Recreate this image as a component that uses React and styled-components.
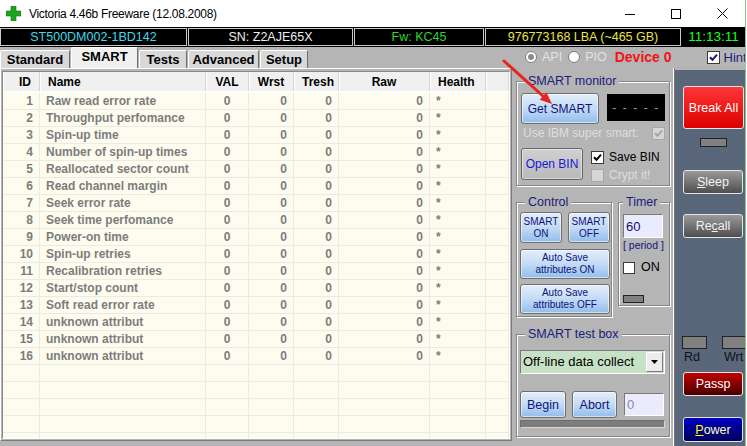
import React from 'react'
import styled, { createGlobalStyle } from 'styled-components'

const GlobalStyle = createGlobalStyle`
  html, body {
    margin: 0;
    padding: 0;
    background: #fff;
  }
  body {
    font-family: 'Liberation Sans', Arial, sans-serif;
    overflow: hidden;
  }
`

const attributes = [
  'Raw read error rate',
  'Throughput perfomance',
  'Spin-up time',
  'Number of spin-up times',
  'Reallocated sector count',
  'Read channel margin',
  'Seek error rate',
  'Seek time perfomance',
  'Power-on time',
  'Spin-up retries',
  'Recalibration retries',
  'Start/stop count',
  'Soft read error rate',
  'unknown attribut',
  'unknown attribut',
  'unknown attribut',
]

const columns = [
  { title: 'ID', width: '37px', align: 'right', head: 'right' },
  { title: 'Name', width: '166px', align: 'left', head: 'left' },
  { title: 'VAL', width: '43px', align: 'center', head: 'center' },
  { title: 'Wrst', width: '45px', align: 'right', head: 'center' },
  { title: 'Tresh', width: '45px', align: 'right', head: 'center' },
  { title: 'Raw', width: '91px', align: 'right', head: 'center' },
  { title: 'Health', width: '56px', align: 'left', head: 'left' },
  { title: '', width: '1fr', align: 'left', head: 'left' },
]

const template = columns.map((c) => c.width).join(' ')

const tabs = [
  { label: 'Standard', w: 70 },
  { label: 'SMART', w: 67, active: true },
  { label: 'Tests', w: 48 },
  { label: 'Advanced', w: 71 },
  { label: 'Setup', w: 48 },
]

const GRAY = '#b5b5b5'

const Window = styled.div`
  position: relative;
  width: 745px;
  height: 446px;
  border-right: 1px solid #86c986;
  background: ${GRAY};
  overflow: hidden;
`

const TitleBar = styled.div`
  display: flex;
  align-items: center;
  height: 27px;
  background: #fff;
`

const AppIcon = styled.svg`
  flex: none;
  margin: 0 8px 0 6px;
`

const Caption = styled.span`
  flex: 1;
  font-size: 12px;
  letter-spacing: -0.3px;
  color: #000;
`

const CaptionButton = styled.div`
  flex: none;
  width: 46px;
  height: 27px;
  display: flex;
  align-items: center;
  justify-content: center;
`

const InfoBar = styled.div`
  display: flex;
  gap: 1px;
  height: 20px;
  padding: 1px 0;
  box-sizing: border-box;
  background: #000;
`

const InfoCell = styled.div`
  flex: ${(p) => (p.$w ? `0 0 ${p.$w}px` : '1')};
  box-sizing: border-box;
  border: 1px solid ${(p) => (p.$bare ? 'transparent' : '#c9c9c9')};
  color: ${(p) => p.$color};
  font-size: ${(p) => (p.$big ? 13.5 : 12.5)}px;
  line-height: 16px;
  text-align: center;
  white-space: nowrap;
`

const Toolbar = styled.div`
  display: flex;
  align-items: flex-end;
  height: 21px;
`

const Tab = styled.div`
  flex: none;
  width: ${(p) => p.$w}px;
  height: ${(p) => (p.$active ? 21 : 18)}px;
  margin-right: 1px;
  box-sizing: border-box;
  border: 1px solid;
  border-color: #fff #6e6e6e transparent #fff;
  border-bottom: none;
  border-radius: 2px 2px 0 0;
  background: ${(p) => (p.$active ? '#f0f0f0' : '#d8d8d8')};
  font-size: 13px;
  font-weight: bold;
  color: #000;
  display: flex;
  align-items: center;
  justify-content: center;
  padding-bottom: ${(p) => (p.$active ? 3 : 0)}px;
`

const Options = styled.div`
  display: flex;
  align-items: center;
  align-self: stretch;
  margin-left: 216px;
  padding-bottom: 1px;
  white-space: nowrap;
`

const Radio = styled.span`
  flex: none;
  width: 12px;
  height: 12px;
  box-sizing: border-box;
  border-radius: 50%;
  border: 1px solid #7c7c7c;
  background: #fff;
  display: flex;
  align-items: center;
  justify-content: center;
  margin-left: ${(p) => p.$gap || 0}px;
  &::after {
    content: '';
    width: 6px;
    height: 6px;
    border-radius: 50%;
    background: ${(p) => (p.$on ? '#8a8a8a' : 'transparent')};
  }
`

const DimLabel = styled.span`
  margin-left: 5px;
  font-size: 12.5px;
  color: #e2e2e2;
`

const DeviceLabel = styled.span`
  margin-left: 8px;
  font-size: 14px;
  font-weight: bold;
  color: #f01414;
`

const HintsLabel = styled.span`
  margin-left: 4px;
  font-size: 13px;
  color: #1b1b7c;
`

const CheckBox = styled.span`
  flex: none;
  width: ${(p) => p.$size || 13}px;
  height: ${(p) => p.$size || 13}px;
  box-sizing: border-box;
  margin-left: ${(p) => p.$gap || 0}px;
  border: 1px solid ${(p) => (p.$disabled ? '#a8a8a8' : '#3a3a3a')};
  background: ${(p) => (p.$disabled ? '#d6d6d6' : '#fff')};
  display: inline-flex;
  align-items: center;
  justify-content: center;
`

const Tick = ({ color }) => (
  <svg width="9" height="9" viewBox="0 0 9 9">
    <path d="M1 4.2 L3.5 6.8 L8 1.6" fill="none" stroke={color} strokeWidth="2" />
  </svg>
)

const Workspace = styled.div`
  display: flex;
  height: 378px;
`

const TabPage = styled.div`
  flex: none;
  width: 512px;
  height: 373px;
  box-sizing: border-box;
  padding: 2px 1px 1px;
  border: 1px solid;
  border-color: #fff #7a7a7a #7a7a7a #fff;
`

const Sheet = styled.div`
  height: 100%;
  box-sizing: border-box;
  border: 1px solid;
  border-color: #8a8a8a #fff #fff #8a8a8a;
  background: #fefcef;
  overflow: hidden;
`

const HeadRow = styled.div`
  display: grid;
  grid-template-columns: ${template};
  height: 21px;
  box-sizing: border-box;
  background: #f0f0f0;
  border-bottom: 2px solid #fff;
`

const HeadCell = styled.div`
  padding: 2px 8px 0;
  text-align: ${(p) => p.$align};
  font-size: 12px;
  font-weight: bold;
  line-height: 16px;
  color: #000;
  border-right: 1px solid #d4d4d4;
  box-shadow: inset 1px 0 0 #fff;
  white-space: nowrap;
  overflow: hidden;
`

const Row = styled.div`
  display: grid;
  grid-template-columns: ${template};
  height: 17px;
  box-sizing: border-box;
  border-bottom: 1px solid #ebebe3;
`

const Cell = styled.div`
  padding: 0 6px;
  text-align: ${(p) => p.$align};
  font-size: 12px;
  font-weight: bold;
  line-height: 17px;
  color: #7c7c7c;
  border-right: 1px solid #ebebe3;
  white-space: nowrap;
  overflow: hidden;
`

const SidePanel = styled.div`
  flex: none;
  width: 163px;
  box-sizing: border-box;
  padding: 6px 0 0 4px;
  display: flex;
  flex-direction: column;
  box-shadow: inset -1px 0 0 #7a7a7a, inset -2px 0 0 #fff;
`

const GroupBox = styled.fieldset`
  margin: 0;
  min-width: 0;
  width: ${(p) => p.$w}px;
  box-sizing: border-box;
  padding: ${(p) => p.$pad};
  border: 1px solid #858585;
  box-shadow: inset 1px 1px 0 #fff, 1px 1px 0 #fff;
`

const Legend = styled.legend`
  padding: 0 3px;
  margin-left: ${(p) => p.$indent ?? 4}px;
  font-size: 12.5px;
  line-height: 14px;
  color: #1b1b7c;
  background: ${GRAY};
`

const BoxRow = styled.div`
  display: flex;
  align-items: ${(p) => p.$align || 'flex-start'};
  justify-content: ${(p) => p.$justify || 'flex-start'};
  gap: ${(p) => p.$gap || 0}px;
  margin-top: ${(p) => p.$top || 0}px;
`

const AquaButton = styled.button`
  flex: none;
  width: ${(p) => p.$w}px;
  height: ${(p) => p.$h}px;
  margin: 0 0 0 ${(p) => p.$left || 0}px;
  padding: 0;
  box-sizing: border-box;
  border: 1px solid #6f6f6f;
  border-radius: 3px;
  background: linear-gradient(#e3eefb, #c3dbf6 50%, #93bdeb);
  box-shadow: inset 0 0 0 1px rgba(255, 255, 255, 0.55);
  font-family: inherit;
  font-size: ${(p) => p.$size || 12}px;
  line-height: ${(p) => p.$lh || 'normal'};
  color: #10127a;
`

const PlainButton = styled.button`
  flex: none;
  width: 62px;
  height: 32px;
  margin: 0;
  padding: 0;
  box-sizing: border-box;
  border: 1px solid #666;
  border-radius: 3px;
  background: linear-gradient(#d0d0d0, #b9b9b9);
  box-shadow: inset 0 0 0 1px rgba(255, 255, 255, 0.45);
  font-family: inherit;
  font-size: 12px;
  color: #1717dc;
`

const Readout = styled.div`
  flex: none;
  width: 58px;
  height: 27px;
  margin: 1px 0 0 8px;
  background: #000;
  color: #9c9c9c;
  font-size: 12px;
  letter-spacing: 1.6px;
  display: flex;
  align-items: center;
  justify-content: center;
`

const DisabledText = styled.span`
  font-size: 12px;
  color: #dedede;
  padding-left: 2px;
`

const CheckColumn = styled.div`
  display: flex;
  flex-direction: column;
  gap: 5px;
  margin-left: 8px;
  padding-top: 3px;
`

const CheckLine = styled.label`
  display: flex;
  align-items: center;
  gap: ${(p) => p.$gap || 5}px;
  font-size: ${(p) => p.$size || 12}px;
  line-height: 13px;
  color: ${(p) => (p.$disabled ? '#dedede' : '#000')};
`

const Field = styled.div`
  flex: none;
  width: 40px;
  height: ${(p) => p.$h || 24}px;
  box-sizing: border-box;
  margin: ${(p) => p.$top || 0}px 0 0 ${(p) => p.$left || 0}px;
  border: 1px solid;
  border-color: #7a7a7a #fff #fff #7a7a7a;
  background: #ebebff;
  padding-left: 2px;
  font-size: 13px;
  color: ${(p) => p.$color || '#0e0e6e'};
  display: flex;
  align-items: center;
`

const Caption2 = styled.div`
  margin-top: 1px;
  font-size: 10.5px;
  line-height: 12px;
  color: #14147a;
`

const Lamp = styled.div`
  width: ${(p) => p.$w}px;
  height: ${(p) => p.$h}px;
  box-sizing: border-box;
  margin: ${(p) => p.$m || 0};
  background: #808080;
  border: 1px solid #222;
`

const Combo = styled.div`
  display: flex;
  width: 145px;
  height: 24px;
  box-sizing: border-box;
  border: 1px solid;
  border-color: #7a7a7a #fff #fff #7a7a7a;
  background: #c6e1c6;
`

const ComboText = styled.span`
  flex: 1;
  padding-left: 2px;
  font-size: 13px;
  line-height: 22px;
  color: #000;
`

const ComboButton = styled.span`
  flex: none;
  width: 17px;
  margin: 1px;
  box-sizing: border-box;
  border: 1px solid;
  border-color: #fff #7a7a7a #7a7a7a #fff;
  background: #ececec;
  display: flex;
  align-items: center;
  justify-content: center;
`

const Progress = styled.div`
  width: 145px;
  height: 8px;
  margin-top: 2px;
  box-sizing: border-box;
  border: 1px solid;
  border-color: #6e6e6e #d8d8d8 #d8d8d8 #6e6e6e;
  background: #7d7d7d;
`

const CommandStrip = styled.div`
  flex: 1;
  margin-top: 2px;
  padding: 16px 0 0 8px;
  background: #5a677a;
  display: flex;
  flex-direction: column;
  align-items: flex-start;
  overflow: hidden;
`

const tones = {
  alarm: ['#ff3636', '#dc0000', '#fff'],
  slate: ['#9a9a9a', '#4e4e4e', '#f2f2f2'],
  maroon: ['#c20000', '#480000', '#fff'],
  navy: ['#0000c4', '#00005c', '#ffffb0'],
}

const StripButton = styled.button`
  flex: none;
  width: ${(p) => p.$w || 60}px;
  height: ${(p) => p.$h}px;
  margin: ${(p) => p.$top || 0}px 0 0;
  padding: 0;
  box-sizing: border-box;
  border: 1px solid #e4e4e4;
  border-radius: 3px;
  background: linear-gradient(${(p) => tones[p.$tone][0]}, ${(p) => tones[p.$tone][1]});
  font-family: inherit;
  font-size: 12.5px;
  color: ${(p) => tones[p.$tone][2]};
`

const HotKey = styled.u`
  color: ${(p) => p.$color || 'inherit'};
  text-decoration-thickness: 1px;
`

const LedPair = styled.div`
  display: flex;
  gap: 15px;
  margin: 98px 0 0 -1px;
`

const Led = styled.div`
  display: flex;
  flex-direction: column;
  align-items: flex-start;
`

const LedLabel = styled.span`
  margin: 1px 0 0 2px;
  font-size: 12.5px;
  line-height: 14px;
  color: #101018;
`

const Annotation = styled.svg`
  position: absolute;
  left: 500px;
  top: 58px;
  pointer-events: none;
`

const blankRows = 6

export default function App() {
  return (
    <>
      <GlobalStyle />
      <Window>
        <TitleBar>
          <AppIcon width="15" height="15" viewBox="0 0 15 15">
            <path d="M5 0h5v5h5v5h-5v5H5v-5H0V5h5z" fill="#1ea31e" stroke="#137a13" strokeWidth="0.6" />
          </AppIcon>
          <Caption>Victoria 4.46b Freeware (12.08.2008)</Caption>
          <CaptionButton>
            <svg width="10" height="10" viewBox="0 0 10 10">
              <path d="M0 5.5h10" stroke="#000" strokeWidth="1" />
            </svg>
          </CaptionButton>
          <CaptionButton>
            <svg width="10" height="10" viewBox="0 0 10 10">
              <rect x="0.5" y="0.5" width="9" height="9" fill="none" stroke="#000" strokeWidth="1" />
            </svg>
          </CaptionButton>
          <CaptionButton>
            <svg width="11" height="11" viewBox="0 0 11 11">
              <path d="M0.5 0.5l10 10M10.5 0.5l-10 10" stroke="#000" strokeWidth="1" />
            </svg>
          </CaptionButton>
        </TitleBar>

        <InfoBar>
          <InfoCell $w={187} $color="#3fd9ec">ST500DM002-1BD142</InfoCell>
          <InfoCell $w={165} $color="#ececec">SN: Z2AJE65X</InfoCell>
          <InfoCell $w={130} $color="#2fd42f">Fw: KC45</InfoCell>
          <InfoCell $w={196} $color="#ebe444">976773168 LBA (~465 GB)</InfoCell>
          <InfoCell $bare $big $color="#1cff1c">11:13:11</InfoCell>
        </InfoBar>

        <Toolbar>
          {tabs.map((t) => (
            <Tab key={t.label} $w={t.w} $active={t.active}>
              {t.label}
            </Tab>
          ))}
          <Options>
            <Radio $on />
            <DimLabel>API</DimLabel>
            <Radio $gap={6} />
            <DimLabel>PIO</DimLabel>
            <DeviceLabel>Device 0</DeviceLabel>
            <CheckBox $gap={35}>
              <Tick color="#14147a" />
            </CheckBox>
            <HintsLabel>Hints</HintsLabel>
          </Options>
        </Toolbar>

        <Workspace>
          <TabPage>
            <Sheet>
              <HeadRow>
                {columns.map((c, i) => (
                  <HeadCell key={i} $align={c.head}>
                    {c.title}
                  </HeadCell>
                ))}
              </HeadRow>
              {attributes.map((name, i) => (
                <Row key={i}>
                  <Cell $align="right">{i + 1}</Cell>
                  <Cell $align="left">{name}</Cell>
                  <Cell $align="center">0</Cell>
                  <Cell $align="right">0</Cell>
                  <Cell $align="right">0</Cell>
                  <Cell $align="right">0</Cell>
                  <Cell $align="left">*</Cell>
                  <Cell $align="left" />
                </Row>
              ))}
              {Array.from({ length: blankRows }).map((_, i) => (
                <Row key={`blank-${i}`}>
                  {columns.map((c, j) => (
                    <Cell key={j} $align={c.align} />
                  ))}
                </Row>
              ))}
            </Sheet>
          </TabPage>

          <SidePanel>
            <GroupBox $w={154} $pad="5px 4px 3px">
              <Legend>SMART monitor</Legend>
              <BoxRow>
                <AquaButton $w={78} $h={31}>Get SMART</AquaButton>
                <Readout>- - - - -</Readout>
              </BoxRow>
              <BoxRow $top={2} $align="center" $justify="space-between">
                <DisabledText>Use IBM super smart:</DisabledText>
                <CheckBox $disabled $size={13}>
                  <Tick color="#a4a4a4" />
                </CheckBox>
              </BoxRow>
              <BoxRow $top={8}>
                <PlainButton>Open BIN</PlainButton>
                <CheckColumn>
                  <CheckLine>
                    <CheckBox>
                      <Tick color="#000" />
                    </CheckBox>
                    Save BIN
                  </CheckLine>
                  <CheckLine $disabled>
                    <CheckBox $disabled />
                    Crypt it!
                  </CheckLine>
                </CheckColumn>
              </BoxRow>
            </GroupBox>

            <BoxRow $top={9} $gap={6}>
              <GroupBox $w={96} $pad="3px 2px 2px 3px">
                <Legend $indent={5}>Control</Legend>
                <BoxRow $gap={6}>
                  <AquaButton $w={42} $h={31} $size={10} $lh="12px">
                    SMART
                    <br />
                    ON
                  </AquaButton>
                  <AquaButton $w={42} $h={31} $size={10} $lh="12px">
                    SMART
                    <br />
                    OFF
                  </AquaButton>
                </BoxRow>
                <BoxRow $top={6}>
                  <AquaButton $w={90} $h={30} $size={10} $lh="12px">
                    Auto Save
                    <br />
                    attributes ON
                  </AquaButton>
                </BoxRow>
                <BoxRow $top={5}>
                  <AquaButton $w={90} $h={30} $size={10} $lh="12px">
                    Auto Save
                    <br />
                    attributes OFF
                  </AquaButton>
                </BoxRow>
              </GroupBox>

              <GroupBox $w={52} $pad="5px 2px 2px 4px">
                <Legend $indent={0}>Timer</Legend>
                <Field>60</Field>
                <Caption2>[ period ]</Caption2>
                <BoxRow $top={10}>
                  <CheckLine $gap={6} $size={12.5}>
                    <CheckBox $size={12} />
                    ON
                  </CheckLine>
                </BoxRow>
                <Lamp $w={21} $h={8} $m="21px 0 0" />
              </GroupBox>
            </BoxRow>

            <BoxRow $top={10}>
              <GroupBox $w={154} $pad="9px 3px 8px">
                <Legend $indent={5}>SMART test box</Legend>
                <Combo>
                  <ComboText>Off-line data collect</ComboText>
                  <ComboButton>
                    <svg width="7" height="4" viewBox="0 0 7 4">
                      <path d="M0 0h7L3.5 4z" fill="#000" />
                    </svg>
                  </ComboButton>
                </Combo>
                <BoxRow $top={17}>
                  <AquaButton $w={46} $h={27} $size={12.5}>Begin</AquaButton>
                  <AquaButton $w={45} $h={27} $size={12.5} $left={6}>
                    Abort
                  </AquaButton>
                  <Field $h={23} $top={2} $left={7} $color="#8a8aa8">
                    0
                  </Field>
                </BoxRow>
                <Progress />
              </GroupBox>
            </BoxRow>
          </SidePanel>

          <CommandStrip>
            <StripButton $tone="alarm" $w={61} $h={43}>
              Break All
            </StripButton>
            <Lamp $w={27} $h={9} $m="9px 0 0 17px" />
            <StripButton $tone="slate" $h={24} $top={23}>
              <HotKey>S</HotKey>leep
            </StripButton>
            <StripButton $tone="slate" $h={24} $top={20}>
              Re<HotKey>c</HotKey>all
            </StripButton>
            <LedPair>
              <Led>
                <Lamp $w={25} $h={13} />
                <LedLabel>Rd</LedLabel>
              </Led>
              <Led>
                <Lamp $w={25} $h={13} />
                <LedLabel>Wrt</LedLabel>
              </Led>
            </LedPair>
            <StripButton $tone="maroon" $h={24} $top={8}>
              Passp
            </StripButton>
            <StripButton $tone="navy" $h={25} $top={21}>
              <HotKey $color="#ffff00">P</HotKey>ower
            </StripButton>
          </CommandStrip>
        </Workspace>

        <Annotation width="60" height="52" viewBox="0 0 60 52">
          <path d="M4 3 L44 39" stroke="#e8241d" strokeWidth="3" strokeLinecap="round" />
          <path d="M52 46 L39.7 41.7 L46.3 34.3 Z" fill="#e8241d" />
        </Annotation>
      </Window>
    </>
  )
}
